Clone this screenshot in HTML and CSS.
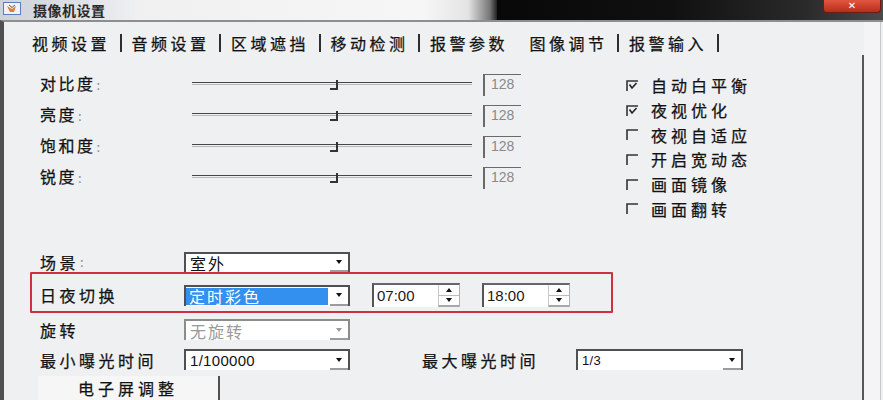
FILE: index.html
```html
<!DOCTYPE html>
<html lang="zh-CN">
<head>
<meta charset="utf-8">
<title>摄像机设置</title>
<link rel="stylesheet" href="styles.css">
</head>
<body>
<div class="titlebar">
  <div class="tb-left">
    <svg class="app-icon" width="18" height="13" viewBox="0 0 18 13">
      <rect x="0.5" y="0.5" width="17" height="12" fill="#eef3fb" stroke="#5a7fb8"/>
      <path d="M4 4 L9 7 L13 4 L11 10 L7 10 Z" fill="#d9832b"/>
      <path d="M6 3 L9 5.5 L12 3" stroke="#8a4a1a" stroke-width="1" fill="none"/>
    </svg>
    <span class="tb-title">摄像机设置</span>
  </div>
  <div class="tb-mid"></div>
  <div class="tb-dark">
    <div class="close">✕</div>
  </div>
</div>

<div class="frame">
  <div class="panel">
    <div class="tabs">
      <span class="tab">视频设置</span><span class="sep"></span>
      <span class="tab">音频设置</span><span class="sep"></span>
      <span class="tab">区域遮挡</span><span class="sep"></span>
      <span class="tab">移动检测</span><span class="sep"></span>
      <span class="tab">报警参数</span><span class="sep blank"></span>
      <span class="tab active">图像调节</span><span class="sep"></span>
      <span class="tab">报警输入</span><span class="sep"></span>
    </div>

    <div class="main">
      <div class="sliders">
        <div class="slabel">对比度<span class="colon">:</span></div>
        <div class="track"><span class="thumb"></span></div>
        <div class="valbox">128</div>

        <div class="slabel">亮度<span class="colon">:</span></div>
        <div class="track"><span class="thumb"></span></div>
        <div class="valbox">128</div>

        <div class="slabel">饱和度<span class="colon">:</span></div>
        <div class="track"><span class="thumb"></span></div>
        <div class="valbox">128</div>

        <div class="slabel">锐度<span class="colon">:</span></div>
        <div class="track"><span class="thumb"></span></div>
        <div class="valbox">128</div>
      </div>

      <div class="checks">
        <div class="chk">
          <svg class="cbox" width="12" height="11" viewBox="0 0 12 11"><path d="M1 11 V1 H12" stroke="#333" stroke-width="1.6" fill="none"/><path d="M3.5 4.5 L6 8 L10.5 3" stroke="#222" stroke-width="1.6" fill="none"/></svg>
          <span>自动白平衡</span>
        </div>
        <div class="chk">
          <svg class="cbox" width="12" height="11" viewBox="0 0 12 11"><path d="M1 11 V1 H12" stroke="#333" stroke-width="1.6" fill="none"/><path d="M3.5 4.5 L6 8 L10.5 3" stroke="#222" stroke-width="1.6" fill="none"/></svg>
          <span>夜视优化</span>
        </div>
        <div class="chk">
          <svg class="cbox" width="12" height="11" viewBox="0 0 12 11"><path d="M1 11 V1 H12" stroke="#333" stroke-width="1.6" fill="none"/></svg>
          <span>夜视自适应</span>
        </div>
        <div class="chk">
          <svg class="cbox" width="12" height="11" viewBox="0 0 12 11"><path d="M1 11 V1 H12" stroke="#333" stroke-width="1.6" fill="none"/></svg>
          <span>开启宽动态</span>
        </div>
        <div class="chk">
          <svg class="cbox" width="12" height="11" viewBox="0 0 12 11"><path d="M1 11 V1 H12" stroke="#333" stroke-width="1.6" fill="none"/></svg>
          <span>画面镜像</span>
        </div>
        <div class="chk">
          <svg class="cbox" width="12" height="11" viewBox="0 0 12 11"><path d="M1 11 V1 H12" stroke="#333" stroke-width="1.6" fill="none"/></svg>
          <span>画面翻转</span>
        </div>
      </div>
    </div>

    <div class="form">
      <div class="frow r1">
        <div class="flabel">场景<span class="colon">:</span></div>
        <div class="select"><span class="val">室外</span><span class="arrow"><i class="tri"></i></span></div>
      </div>

      <div class="frow daynight">
        <div class="flabel">日夜切换</div>
        <div class="select dn"><span class="val hl">定时彩色</span><span class="arrow"><i class="tri"></i></span></div>
        <div class="spin"><span class="val">07:00</span><span class="btns"><span class="btn"><i class="tri up"></i></span><span class="btn"><i class="tri"></i></span></span></div>
        <div class="spin"><span class="val">18:00</span><span class="btns"><span class="btn"><i class="tri up"></i></span><span class="btn"><i class="tri"></i></span></span></div>
      </div>

      <div class="frow r3">
        <div class="flabel">旋转</div>
        <div class="select disabled"><span class="val">无旋转</span><span class="arrow"><i class="tri"></i></span></div>
      </div>

      <div class="frow r4">
        <div class="flabel">最小曝光时间</div>
        <div class="select"><span class="val num">1/100000</span><span class="arrow"><i class="tri"></i></span></div>
        <div class="flabel maxl">最大曝光时间</div>
        <div class="select wide"><span class="val num small">1/3</span><span class="arrow"><i class="tri"></i></span></div>
      </div>

      <div class="ebtn">电子屏调整</div>
    </div>
  </div>
  <div class="right-edge">
    <div class="vline"></div>
    <div class="edge-fill"></div>
    <div class="edge-line"></div>
  </div>
</div>
</body>
</html>
```

FILE: styles.css
```css
html, body {
  margin: 0;
  padding: 0;
}
body {
  width: 883px;
  height: 400px;
  overflow: hidden;
  background: #eff0f2;
  font-family: "Noto Sans CJK SC", "Liberation Sans", sans-serif;
  color: #121212;
}

/* title bar */
.titlebar {
  display: flex;
  height: 20px;
}
.tb-left {
  width: 135px;
  display: flex;
  align-items: center;
  background: linear-gradient(90deg, #cdd2d9 0%, #dfe2e6 60%, #eeeff1 100%);
}
.app-icon {
  margin: 0 0 3px 3px;
}
.tb-title {
  margin-left: 12px;
  font-size: 14px;
  line-height: 20px;
  font-weight: 700;
  color: #2a2a2a;
  letter-spacing: 0.5px;
  white-space: nowrap;
}
.tb-mid {
  width: 362px;
  background: linear-gradient(90deg, #f0f0f1 0%, #f6f6f6 80%, #e4e4e4 92%, #777 98%, #222 100%);
}
.tb-dark {
  flex: 1;
  display: flex;
  justify-content: flex-end;
  align-items: flex-start;
  padding-right: 2px;
  background: linear-gradient(90deg, #080808 0%, #101010 45%, #2a2a2a 80%, #4a4a4a 100%);
}
.close {
  width: 58px;
  height: 13px;
  box-sizing: border-box;
  border: 1px solid #6e1c10;
  border-top: none;
  border-radius: 0 0 4px 4px;
  background: linear-gradient(#e0563e, #b92c1c);
  color: #fff;
  font-family: "DejaVu Sans", sans-serif;
  font-size: 10px;
  font-weight: 700;
  line-height: 11px;
  text-align: center;
}

/* window frame */
.frame {
  display: flex;
  height: 380px;
  box-sizing: border-box;
  border-top: 2px solid #8e8e8e;
  border-left: 4px solid #4f4f4f;
}
.panel {
  flex: 1;
  display: flex;
  flex-direction: column;
  padding-left: 26px;
}

/* tabs */
.tabs {
  display: flex;
  align-items: center;
  height: 20px;
  margin: 11px 0 0 2px;
  font-size: 16px;
  line-height: 20px;
  letter-spacing: 3.5px;
  white-space: nowrap;
  -webkit-text-stroke: 0.25px #121212;
}
.sep {
  width: 21.5px;
  height: 20px;
  display: flex;
  justify-content: center;
  align-items: center;
}
.sep::before {
  content: "";
  width: 2px;
  height: 18px;
  background: #2e2e2e;
}
.sep.blank::before {
  display: none;
}

/* sliders + checks */
.main {
  display: flex;
  margin-top: 15px;
}
.sliders {
  margin-left: 10px;
  display: grid;
  grid-template-columns: 152px 280px 49px;
  grid-auto-rows: 31px;
  align-items: center;
  align-self: flex-start;
}
.slabel {
  font-size: 16px;
  letter-spacing: 2.5px;
  line-height: 20px;
  -webkit-text-stroke: 0.25px #121212;
}
.colon {
  color: #8a8a8a;
  font-size: 13px;
  letter-spacing: 0;
  margin-left: 1px;
  -webkit-text-stroke: 0;
}
.track {
  position: relative;
  height: 1px;
  border-top: 1px solid #474747;
  border-bottom: 1px solid #b8b8b8;
}
.thumb {
  position: absolute;
  left: 138px;
  top: -3px;
  width: 6px;
  height: 8px;
  border-right: 2px solid #333;
  border-bottom: 2px solid #333;
}
.valbox {
  align-self: start;
  margin: 6px 0 0 11px;
  width: 38px;
  height: 22px;
  box-sizing: border-box;
  border-left: 2px solid #6a6a6a;
  border-top: 1px solid #6a6a6a;
  padding-left: 6px;
  font-family: "Liberation Sans", sans-serif;
  font-size: 14px;
  line-height: 19px;
  color: #8a8a8a;
}
.checks {
  margin: 5px 0 0 105px;
  display: flex;
  flex-direction: column;
}
.chk {
  height: 24.7px;
  display: flex;
  align-items: center;
  font-size: 16px;
  letter-spacing: 4px;
  -webkit-text-stroke: 0.25px #121212;
}
.cbox {
  margin-right: 13px;
}

/* form */
.form {
  display: flex;
  flex-direction: column;
  margin-top: 31px;
}
.frow {
  display: flex;
  align-items: stretch;
  height: 20px;
  padding-left: 10px;
}
.flabel {
  width: 144px;
  flex: none;
  display: flex;
  align-items: center;
  font-size: 16px;
  letter-spacing: 3.5px;
  line-height: 20px;
  white-space: nowrap;
  -webkit-text-stroke: 0.25px #121212;
}
.flabel.maxl {
  width: 154px;
  margin-left: 72px;
}
.select {
  width: 166px;
  flex: none;
  box-sizing: border-box;
  display: flex;
  align-items: center;
  background: #fff;
  border-top: 2px solid #505050;
  border-left: 2px solid #505050;
  border-right: 2px solid #505050;
}
.select.wide {
  width: 167px;
}
.select .val {
  flex: 1;
  padding-left: 4px;
  font-size: 16px;
  letter-spacing: 2px;
  line-height: 18px;
  white-space: nowrap;
}
.select .val.num {
  font-family: "Liberation Sans", sans-serif;
  font-size: 15px;
  letter-spacing: 0.3px;
}
.select .val.num.small {
  font-size: 13px;
}
.select .arrow {
  width: 18px;
  height: 100%;
  flex: none;
  display: flex;
  align-items: center;
  justify-content: center;
  box-sizing: border-box;
  border-bottom: 2px solid #9c9c9c;
}
.tri {
  width: 0;
  height: 0;
  border-left: 3.5px solid transparent;
  border-right: 3.5px solid transparent;
  border-top: 4px solid #111;
}
.tri.up {
  border-top: none;
  border-bottom: 4px solid #111;
}
.select.disabled {
  border-color: #8c8c8c;
}
.select.disabled .val {
  color: #9a9a9a;
}
.select.disabled .tri {
  border-top-color: #9a9a9a;
}

.frow.daynight {
  height: 41px;
  width: 583px;
  box-sizing: border-box;
  border: 2px solid #cf2f3e;
  border-radius: 1px;
  padding: 5px 0 0 8px;
  align-items: center;
}
.select.dn {
  height: 21px;
  align-items: stretch;
}
.select .val.hl {
  margin: 1px 2px 1px 0;
  padding-left: 3px;
  background: #3390ef;
  color: #fff;
  line-height: 17px;
}
.spin {
  width: 88px;
  height: 24px;
  flex: none;
  margin-left: 22px;
  box-sizing: border-box;
  display: flex;
  background: #fff;
  border-left: 2px solid #555;
  border-top: 2px solid #666;
  border-right: 1px solid #b0b0b0;
}
.spin .val {
  flex: 1;
  padding-left: 3px;
  font-family: "Liberation Sans", sans-serif;
  font-size: 15px;
  line-height: 21px;
  color: #1a1a1a;
}
.spin .btns {
  width: 20px;
  display: flex;
  flex-direction: column;
  border-left: 1px solid #c8c8c8;
  border-bottom: 2px solid #a8a8a8;
}
.spin .btn {
  flex: 1;
  display: flex;
  align-items: center;
  justify-content: center;
}
.spin .btn + .btn {
  border-top: 1px solid #bdbdbd;
}
.spin .tri {
  border-left-width: 3px;
  border-right-width: 3px;
}

.frow.r3 {
  margin-top: 6px;
  height: 21px;
}
.frow.r4 {
  margin-top: 9px;
  height: 21px;
}
.ebtn {
  margin: 6px 0 0 8px;
  width: 182px;
  height: 24px;
  box-sizing: border-box;
  padding-top: 1px;
  background: #f6f6f7;
  border-right: 2px solid #505050;
  text-align: center;
  font-size: 16px;
  letter-spacing: 4px;
  line-height: 22px;
  -webkit-text-stroke: 0.25px #121212;
}

/* right edge */
.right-edge {
  width: 21px;
  display: flex;
}
.vline {
  width: 2px;
  margin-top: 33px;
  background: #575757;
}
.edge-fill {
  flex: 1;
  background: #f4f4f6;
}
.edge-line {
  width: 1px;
  margin-right: 2px;
  background: #c6c6c6;
}
```
